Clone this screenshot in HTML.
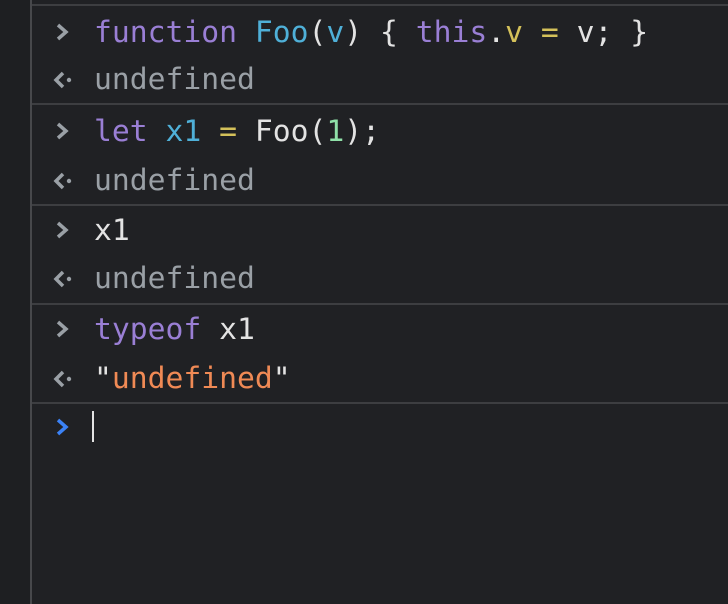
<!DOCTYPE html><html><head><style>
body{margin:0;width:728px;height:604px;background:#202124;overflow:hidden;position:relative;font-family:"DejaVu Sans Mono","Liberation Mono",monospace;}
.side{position:absolute;left:0;top:0;width:30px;height:604px;background:#1e1f22;border-right:2px solid #47484b}
.hl{position:absolute;left:32px;right:0;height:2px;background:#3d3e41}
.t{position:absolute;left:94px;font-size:29.7px;line-height:36px;white-space:pre;color:#e3e3e3}
.k{color:#9a7fd5}.b{color:#4fb0d8}.y{color:#d4c15a}.g{color:#9aa0a6}.o{color:#f08a55}.n{color:#8fe0a8}
</style></head><body>
<div class="side"></div>
<div class="hl" style="top:4px"></div>
<div class="hl" style="top:103px"></div>
<div class="hl" style="top:204px"></div>
<div class="hl" style="top:303px"></div>
<div class="hl" style="top:402px"></div>
<svg width="728" height="604" style="position:absolute;left:0;top:0">
<g fill="none" stroke="#9aa0a6" stroke-width="3.5">
<path d="M58 25l8 7-8 7"/><path d="M58 124l8 7-8 7"/><path d="M58 223l8 7-8 7"/><path d="M58 322l8 7-8 7"/>
<path d="M63 73l-7 7 7 7"/><path d="M63 174l-7 7 7 7"/><path d="M63 272l-7 7 7 7"/><path d="M63 372l-7 7 7 7"/>
</g>
<g fill="#9aa0a6"><circle cx="69" cy="80" r="2.2"/><circle cx="69" cy="181" r="2.2"/><circle cx="69" cy="279" r="2.2"/><circle cx="69" cy="379" r="2.2"/></g>
<path d="M58 420l8 7-8 7" fill="none" stroke="#3b82f6" stroke-width="3.5"/>
<rect x="92" y="411" width="2" height="31" fill="#e3e3e3"/>
</svg>
<div class="t" style="top:15px"><span class="k">function</span> <span class="b">Foo</span>(<span class="b">v</span>) { <span class="k">this</span>.<span class="y">v</span> <span class="y">=</span> v; }</div>
<div class="t g" style="top:62px">undefined</div>
<div class="t" style="top:114px"><span class="k">let</span> <span class="b">x1</span> <span class="y">=</span> Foo(<span class="n">1</span>);</div>
<div class="t g" style="top:163px">undefined</div>
<div class="t" style="top:213px">x1</div>
<div class="t g" style="top:261px">undefined</div>
<div class="t" style="top:312px"><span class="k">typeof</span> x1</div>
<div class="t" style="top:361px">"<span class="o">undefined</span>"</div>
</body></html>
